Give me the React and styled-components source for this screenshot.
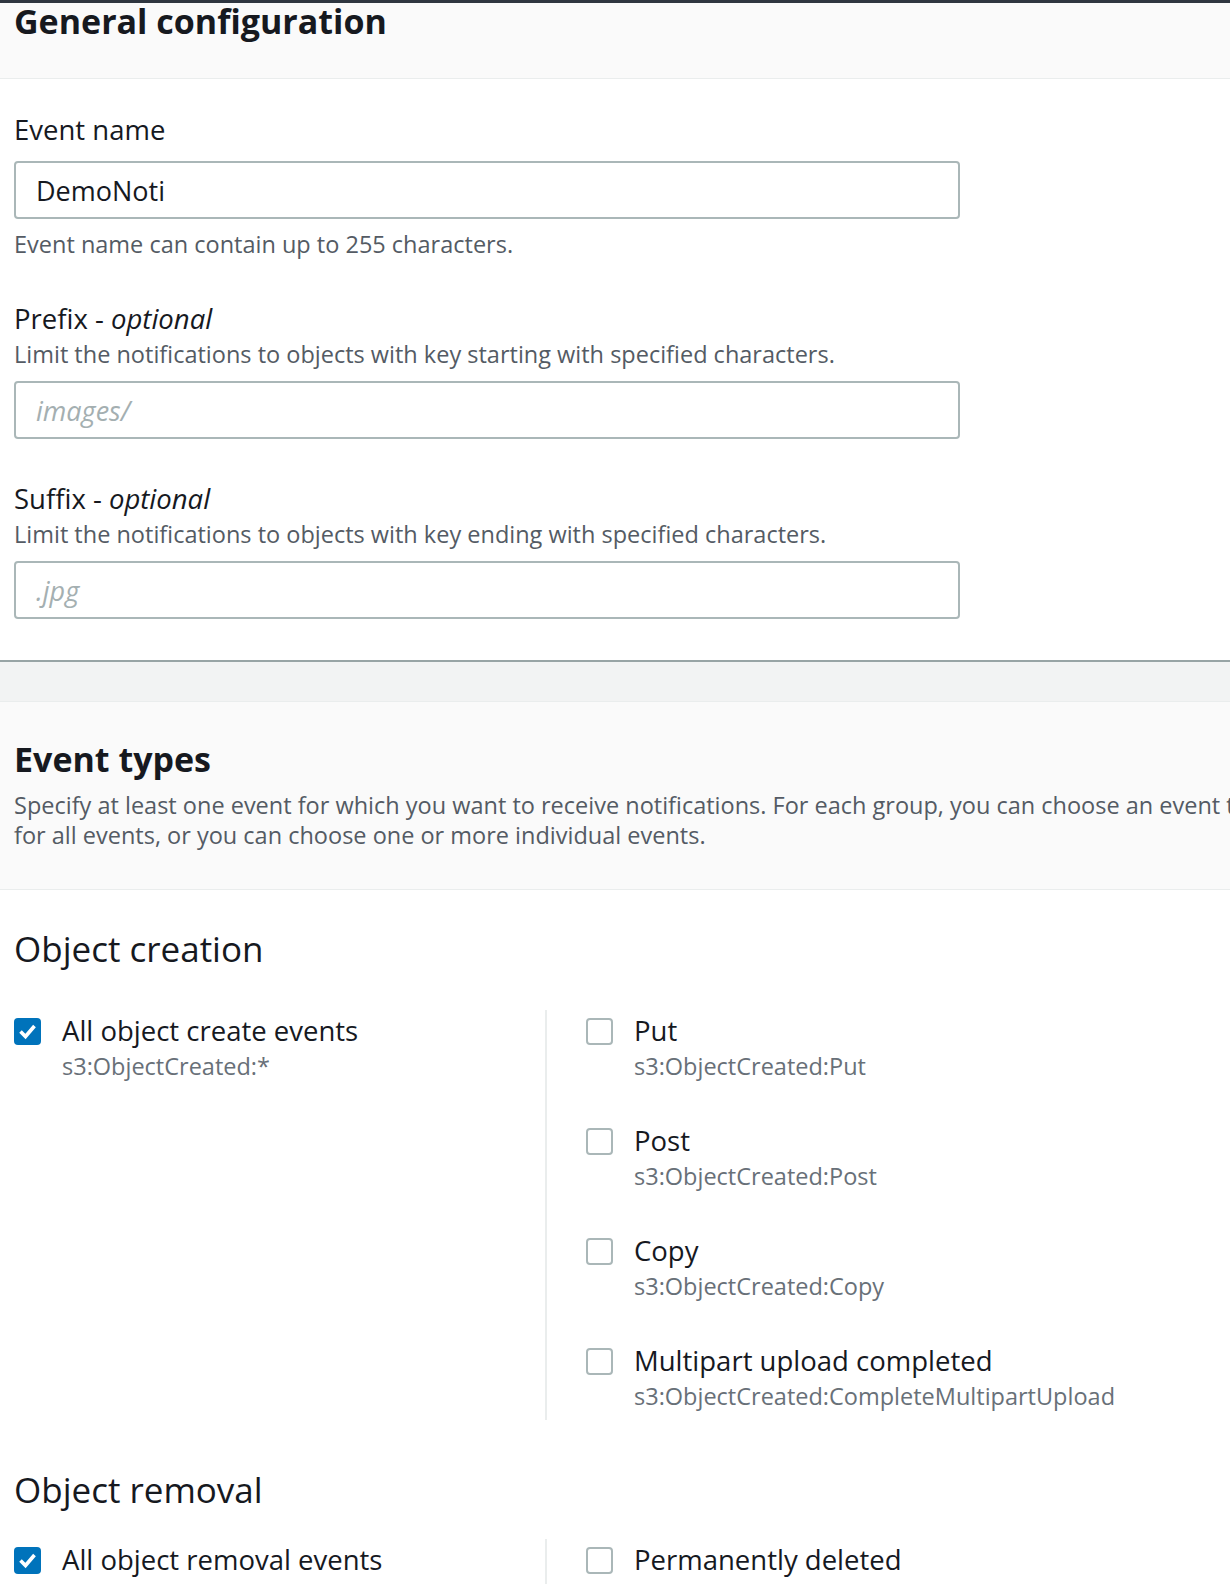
import React from 'react';
import styled, { createGlobalStyle } from 'styled-components';

const GlobalStyle = createGlobalStyle`
  body {
    margin: 0;
    background: #ffffff;
    font-family: "Open Sans", "Liberation Sans", sans-serif;
    color: #16191f;
    overflow: hidden;
  }
`;

const Page = styled.div`
  width: 1230px;
  overflow: hidden;
  background: #f2f3f3;
`;

const Card = styled.section`
  background: #ffffff;
  border-top: ${(p) => (p.$first ? '3px solid #2f3640' : '1px solid #eaeded')};
  border-bottom: ${(p) => (p.$first ? '2px solid #98a4a5' : 'none')};
  margin-bottom: ${(p) => (p.$first ? '39px' : '0')};
`;

const CardHeader = styled.header`
  background: #fafafa;
  border-bottom: 1px solid #eaeded;
  padding: ${(p) => p.$pad || '0 14px'};
  height: ${(p) => p.$height || 'auto'};
  box-sizing: border-box;
`;

const Title = styled.h2`
  margin: 0;
  font-size: 34px;
  line-height: ${(p) => p.$lh || '40px'};
  font-weight: 700;
  color: #16191f;
`;

const HeaderDesc = styled.p`
  margin: 11px 0 0;
  font-size: 23.5px;
  line-height: 30px;
  color: #545b64;
  white-space: nowrap;
`;

const CardBody = styled.div`
  padding: ${(p) => p.$pad || '34px 14px 41px'};
`;

const Field = styled.div`
  display: flex;
  flex-direction: column;
  & + & {
    margin-top: 43px;
  }
`;

const Label = styled.label`
  font-size: 27.5px;
  line-height: 34px;
  color: #16191f;

  em {
    font-style: italic;
  }
`;

const Desc = styled.span`
  font-size: 23.5px;
  line-height: 30px;
  color: #545b64;
  margin-top: ${(p) => p.$top || '0'};
`;

const Input = styled.input`
  box-sizing: border-box;
  width: 946px;
  height: 58px;
  margin-top: ${(p) => p.$top || '12px'};
  padding: 0 20px;
  border: 2px solid #aab7b8;
  border-radius: 4px;
  background: #ffffff;
  font-family: "Open Sans", "Liberation Sans", sans-serif;
  font-size: 27px;
  color: #16191f;
  outline: none;

  &::placeholder {
    color: #a4afb1;
    font-style: italic;
  }
`;

const GroupTitle = styled.h3`
  margin: ${(p) => p.$top || '0'} 0 0;
  font-size: 35px;
  line-height: 44px;
  font-weight: 400;
  color: #16191f;
`;

const Columns = styled.div`
  display: grid;
  grid-template-columns: 531px 1fr;
  margin-top: ${(p) => p.$top || '39px'};
`;

const Column = styled.div`
  display: flex;
  flex-direction: column;
  gap: 43px;
  padding: 4px 0 ${(p) => p.$bottom || '9px'} ${(p) => (p.$divider ? '39px' : '0')};
  border-left: ${(p) => (p.$divider ? '2px solid #eaeded' : 'none')};
`;

const Option = styled.div`
  display: flex;
  align-items: flex-start;
  gap: 21px;
`;

const Box = styled.span`
  flex: none;
  box-sizing: border-box;
  width: 27px;
  height: 27px;
  margin-top: 4px;
  border-radius: 4px;
  border: ${(p) => (p.$checked ? 'none' : '2px solid #aab7b8')};
  background: ${(p) => (p.$checked ? '#0073bb' : '#ffffff')};
  display: flex;
  align-items: center;
  justify-content: center;
`;

const OptionText = styled.div`
  display: flex;
  flex-direction: column;
`;

const OptionLabel = styled.span`
  font-size: 27.5px;
  line-height: 34px;
  color: #16191f;
`;

const OptionSub = styled.span`
  margin-top: 3px;
  font-size: 23.5px;
  line-height: 30px;
  color: #687078;
`;

const Check = () => (
  <svg width="27" height="27" viewBox="0 0 27 27">
    <polyline
      points="6.5,13.5 11.5,18.5 20.5,8"
      fill="none"
      stroke="#ffffff"
      strokeWidth="3.6"
      strokeLinejoin="miter"
    />
  </svg>
);

const CheckOption = ({ checked, label, sub }) => (
  <Option>
    <Box $checked={checked}>{checked && <Check />}</Box>
    <OptionText>
      <OptionLabel>{label}</OptionLabel>
      {sub && <OptionSub>{sub}</OptionSub>}
    </OptionText>
  </Option>
);

const createEvents = [
  { label: 'Put', sub: 's3:ObjectCreated:Put' },
  { label: 'Post', sub: 's3:ObjectCreated:Post' },
  { label: 'Copy', sub: 's3:ObjectCreated:Copy' },
  { label: 'Multipart upload completed', sub: 's3:ObjectCreated:CompleteMultipartUpload' },
];

export default function App() {
  return (
    <>
      <GlobalStyle />
      <Page>
        <Card $first>
          <CardHeader $height="76px">
            <Title $lh="36px">General configuration</Title>
          </CardHeader>
          <CardBody>
            <Field>
              <Label>Event name</Label>
              <Input $top="14px" defaultValue="DemoNoti" />
              <Desc $top="10px">Event name can contain up to 255 characters.</Desc>
            </Field>
            <Field>
              <Label>
                Prefix - <em>optional</em>
              </Label>
              <Desc $top="3px">Limit the notifications to objects with key starting with specified characters.</Desc>
              <Input placeholder="images/" />
            </Field>
            <Field>
              <Label>
                Suffix - <em>optional</em>
              </Label>
              <Desc $top="3px">Limit the notifications to objects with key ending with specified characters.</Desc>
              <Input placeholder=".jpg" />
            </Field>
          </CardBody>
        </Card>

        <Card>
          <CardHeader $pad="37px 14px 39px">
            <Title>Event types</Title>
            <HeaderDesc>
              Specify at least one event for which you want to receive notifications. For each group, you can choose an event type
              <br />
              for all events, or you can choose one or more individual events.
            </HeaderDesc>
          </CardHeader>
          <CardBody $pad="37px 14px 0">
            <GroupTitle>Object creation</GroupTitle>
            <Columns>
              <Column>
                <CheckOption checked label="All object create events" sub="s3:ObjectCreated:*" />
              </Column>
              <Column $divider>
                {createEvents.map((e) => (
                  <CheckOption key={e.label} label={e.label} sub={e.sub} />
                ))}
              </Column>
            </Columns>

            <GroupTitle $top="48px">Object removal</GroupTitle>
            <Columns $top="27px">
              <Column $bottom="40px">
                <CheckOption checked label="All object removal events" sub="s3:ObjectRemoved:*" />
              </Column>
              <Column $divider $bottom="40px">
                <CheckOption label="Permanently deleted" sub="s3:ObjectRemoved:Delete" />
              </Column>
            </Columns>
          </CardBody>
        </Card>
      </Page>
    </>
  );
}
